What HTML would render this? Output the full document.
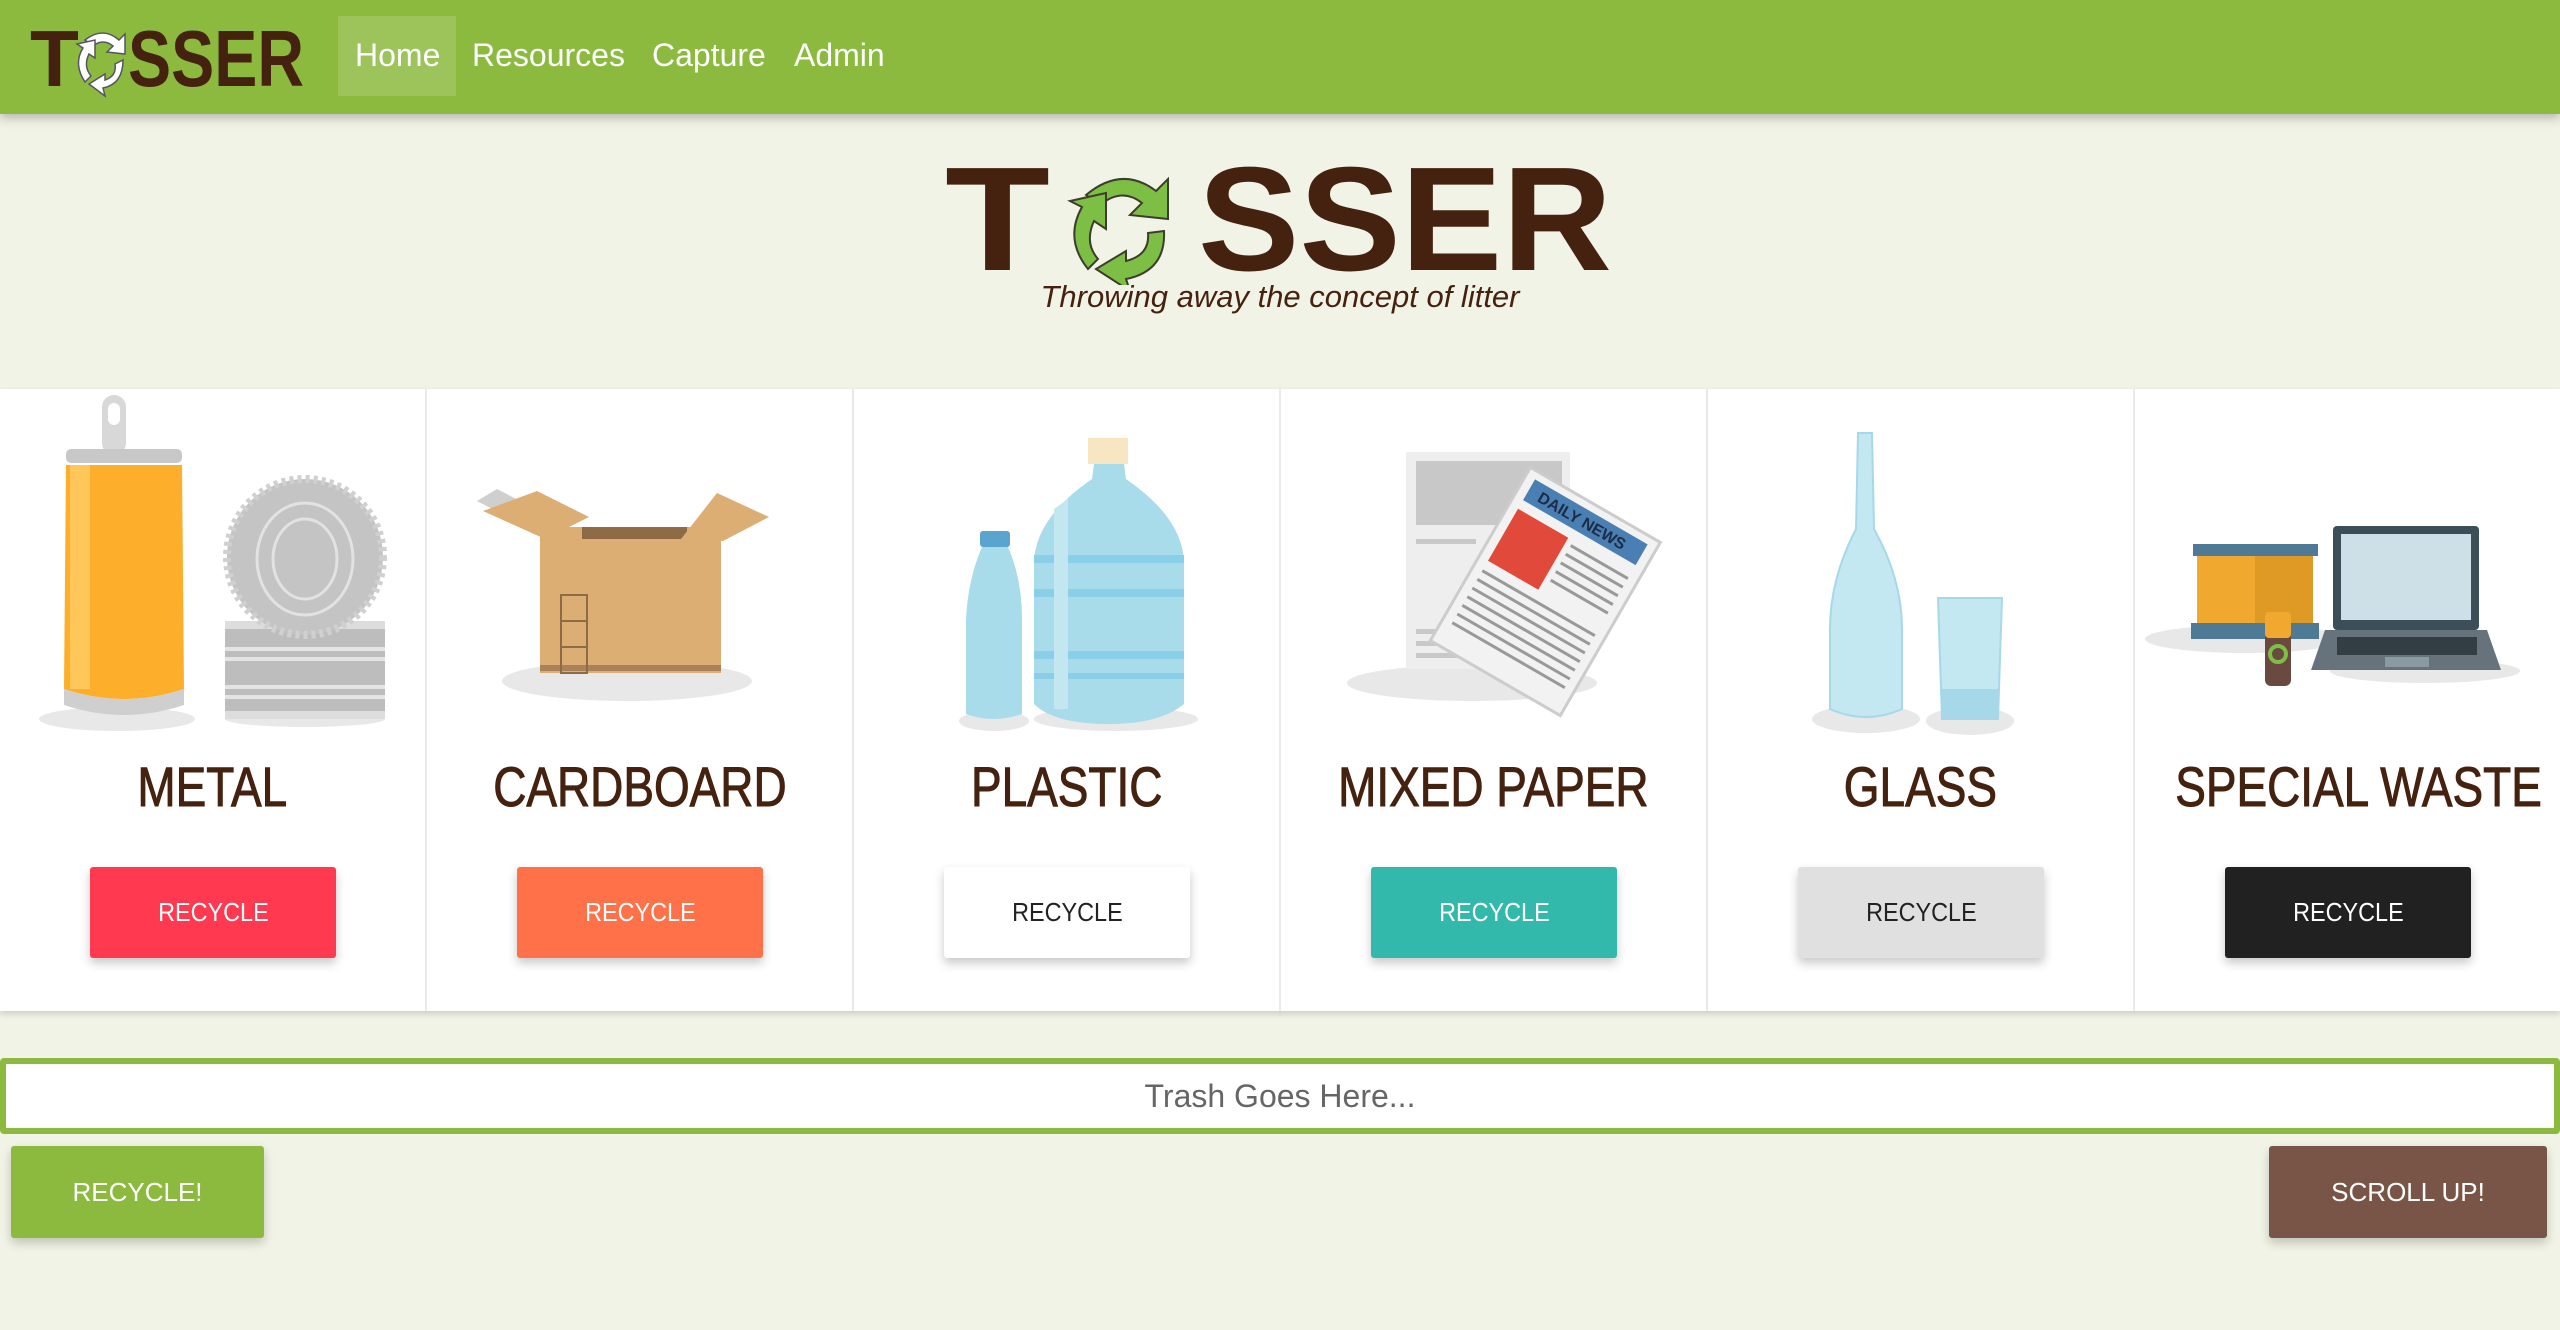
<!DOCTYPE html>
<html><head><meta charset="utf-8">
<style>
*{box-sizing:border-box;margin:0;padding:0}
html,body{width:2560px;height:1330px;overflow:hidden}
body{background:#F1F3E6;font-family:"Liberation Sans",sans-serif;position:relative}
.nav{position:absolute;left:0;top:0;width:2560px;height:114px;background:#8BBA3E;box-shadow:0 4px 10px rgba(0,0,0,.25);z-index:2}
.navlogo{position:absolute;left:30px;top:14px;height:86px;width:280px}
.home{position:absolute;left:338px;top:16px;width:118px;height:80px;background:rgba(255,255,255,.15)}
.nl{position:absolute;top:32px;color:#fff;font-size:32px;line-height:46px}
.logo{position:absolute;left:940px;top:150px;width:680px;height:135px}
.tag{position:absolute;left:0;width:2560px;top:279px;text-align:center;font-style:italic;font-size:31px;color:#45220F}
.cards{position:absolute;left:0;top:389px;width:2560px;height:622px;display:flex;box-shadow:0 3px 6px rgba(0,0,0,.15)}
.card{position:relative;flex:1;background:#fff;border-left:2px solid #eaeaea}
.card:first-child{border-left:none}
.card svg{position:absolute;left:0;top:0;width:426px;height:350px}
.title{position:absolute;top:368px;left:0;right:0;text-align:center;font-size:56px;color:#45220F;line-height:60px;-webkit-text-stroke:1px #45220F}
.title span{display:inline-block;transform:scaleX(.82);white-space:nowrap}
.btn{position:absolute;left:90px;top:478px;width:246px;height:91px;border-radius:3px;font-size:26px;line-height:91px;text-align:center;box-shadow:0 5px 10px rgba(0,0,0,.22)}
.btn span{display:inline-block;transform:scaleX(.9)}
.inp{position:absolute;left:0;top:1058px;width:2560px;height:76px;border:6px solid #8BBA3E;border-radius:4px;background:#fff;text-align:center;font-size:32px;line-height:64px;color:#666}
.big{position:absolute;top:1146px;height:92px;border-radius:3px;color:#fff;font-size:26px;line-height:92px;text-align:center;box-shadow:0 5px 10px rgba(0,0,0,.2)}
</style></head><body>
<div class="nav">
 <svg class="navlogo" viewBox="0 0 280 86">
  <text x="0" y="72" font-family="Liberation Sans" font-weight="bold" font-size="80" fill="#45220F" textLength="50">T</text>
  <g transform="translate(73,44)" fill="#fff" stroke="#556" stroke-width="1.5">
   <path d="M-18,-18 Q0,-32 16,-18 L22,-24 L22,-4 L4,-6 L10,-12 Q0,-20 -10,-12Z"/>
   <path d="M20,2 Q20,26 0,30 L2,38 L-14,26 L2,16 L2,22 Q14,18 12,6Z"/>
   <path d="M-18,24 Q-30,6 -20,-10 L-26,-14 L-8,-18 L-8,0 L-14,-4 Q-20,8 -12,18Z"/>
  </g>
  <text x="98" y="72" font-family="Liberation Sans" font-weight="bold" font-size="80" fill="#45220F" textLength="176" lengthAdjust="spacingAndGlyphs">SSER</text>
 </svg>
 <div class="home"></div>
 <div class="nl" style="left:355px">Home</div>
 <div class="nl" style="left:472px">Resources</div>
 <div class="nl" style="left:652px">Capture</div>
 <div class="nl" style="left:794px">Admin</div>
</div>

<svg class="logo" viewBox="940 150 680 135">
 <text x="945" y="270" font-family="Liberation Sans" font-weight="bold" font-size="148" fill="#45220F" textLength="105" lengthAdjust="spacingAndGlyphs">T</text>
 <g transform="translate(1122,225)" fill="#7DBE45" stroke="#3d3d2d" stroke-width="2">
  <path d="M-36,-30 Q0,-60 34,-34 L46,-46 L46,-6 L8,-10 L20,-22 Q0,-38 -22,-20Z"/>
  <path d="M42,6 Q44,46 4,54 L8,66 L-26,44 L4,26 L4,36 Q28,30 26,8Z"/>
  <path d="M-34,44 Q-58,14 -40,-18 L-52,-24 L-16,-32 L-16,4 L-28,-4 Q-38,18 -24,34Z"/>
 </g>
 <text x="1198" y="270" font-family="Liberation Sans" font-weight="bold" font-size="148" fill="#45220F" textLength="414" lengthAdjust="spacingAndGlyphs">SSER</text>
</svg>
<div class="tag">Throwing away the concept of litter</div>

<div class="cards">
 <div class="card">
  <svg viewBox="0 0 426 350">
   <ellipse cx="117" cy="330" rx="78" ry="12" fill="#e8e8e8"/>
   <rect x="102" y="6" width="24" height="60" rx="12" fill="#d8d8d8"/><rect x="108" y="14" width="12" height="22" rx="6" fill="#fff"/>
   <rect x="66" y="60" width="116" height="14" rx="5" fill="#c8c8c8"/>
   <path d="M66,76 L182,76 L184,300 Q124,320 64,300Z" fill="#FDAE2B"/>
   <rect x="70" y="76" width="20" height="224" fill="#FFC65A"/>
   <path d="M64,300 Q124,320 184,300 L184,316 Q124,336 64,316Z" fill="#cfcfcf"/>
   <ellipse cx="305" cy="330" rx="80" ry="8" fill="#e8e8e8"/>
   <rect x="225" y="232" width="160" height="98" fill="#bdbdbd"/>
   <rect x="225" y="232" width="160" height="8" fill="#ddd"/>
   <g fill="#e4e4e4"><rect x="225" y="258" width="160" height="4"/><rect x="225" y="268" width="160" height="4"/><rect x="225" y="296" width="160" height="4"/><rect x="225" y="306" width="160" height="4"/></g>
   <rect x="225" y="322" width="160" height="8" fill="#ddd"/>
   <circle cx="305" cy="168" r="78" fill="#c4c4c4" stroke="#d0d0d0" stroke-width="8" stroke-dasharray="4 4"/>
   <ellipse cx="305" cy="170" rx="48" ry="56" fill="none" stroke="#e2e2e2" stroke-width="3"/>
   <ellipse cx="305" cy="170" rx="32" ry="40" fill="none" stroke="#e2e2e2" stroke-width="3"/>
  </svg>
  <div class="title"><span>METAL</span></div>
  <div class="btn" style="background:#FF3A50;color:#fff"><span>RECYCLE</span></div>
 </div>
 <div class="card">
  <svg viewBox="0 0 426 350">
   <ellipse cx="200" cy="292" rx="125" ry="20" fill="#e8e8e8"/>
   <path d="M50,112 L70,100 L120,126 L100,138Z" fill="#cfcfcf"/>
   <rect x="113" y="138" width="181" height="146" fill="#DCAE73"/>
   <rect x="155" y="138" width="105" height="12" fill="#8E6B45"/>
   <rect x="113" y="276" width="181" height="6" fill="#a9825a"/>
   <path d="M56,122 L110,102 L162,128 L118,150Z" fill="#DCAE73"/>
   <path d="M254,150 L290,104 L342,128 L296,152Z" fill="#DCAE73"/>
   <g fill="none" stroke="#8E6B45" stroke-width="2"><rect x="134" y="232" width="26" height="26"/><rect x="134" y="258" width="26" height="26"/><rect x="134" y="206" width="26" height="26"/></g>
  </svg>
  <div class="title"><span>CARDBOARD</span></div>
  <div class="btn" style="background:#FF7149;color:#fff"><span>RECYCLE</span></div>
 </div>
 <div class="card">
  <svg viewBox="0 0 426 350">
   <ellipse cx="140" cy="332" rx="35" ry="10" fill="#e8e8e8"/><ellipse cx="262" cy="330" rx="82" ry="12" fill="#e8e8e8"/>
   <rect x="126" y="142" width="30" height="16" rx="3" fill="#5AA5D0"/>
   <path d="M128,158 L154,158 Q168,190 168,230 L168,325 Q140,335 112,325 L112,230 Q114,190 128,158Z" fill="#A9DCEB"/>
   <rect x="234" y="49" width="40" height="26" fill="#F7E6C1"/>
   <path d="M240,75 L270,75 L272,90 Q330,130 330,175 L330,315 Q306,335 255,335 Q200,335 180,315 L180,175 Q180,130 238,90Z" fill="#A9DCEB"/>
   <g fill="#89CFE7"><rect x="180" y="166" width="150" height="8"/><rect x="180" y="200" width="150" height="8"/><rect x="180" y="262" width="150" height="8"/><rect x="180" y="284" width="150" height="6"/></g>
   <path d="M200,120 L214,110 L214,320 L200,320Z" fill="#C2E7F1"/>
  </svg>
  <div class="title"><span>PLASTIC</span></div>
  <div class="btn" style="background:#fff;color:#222"><span>RECYCLE</span></div>
 </div>
 <div class="card">
  <svg viewBox="0 0 426 350">
   <ellipse cx="191" cy="294" rx="125" ry="18" fill="#e8e8e8"/>
   <rect x="125" y="63" width="164" height="217" fill="#eee"/>
   <rect x="135" y="72" width="146" height="64" fill="#c8c8c8"/>
   <g fill="#c8c8c8"><rect x="135" y="240" width="80" height="5"/><rect x="135" y="252" width="80" height="5"/><rect x="135" y="264" width="80" height="5"/><rect x="135" y="150" width="60" height="5"/></g>
   <g transform="rotate(30 260 200)">
    <rect x="190" y="100" width="150" height="200" fill="#f2f2f2" stroke="#ccc" stroke-width="3"/>
    <rect x="200" y="108" width="130" height="24" fill="#4A7FB4"/>
    <text x="212" y="126" font-family="Liberation Sans" font-weight="bold" font-size="16" fill="#1d2c44">DAILY NEWS</text>
    <rect x="200" y="142" width="58" height="60" fill="#E14A3A"/>
    <g fill="#999"><rect x="264" y="146" width="66" height="3"/><rect x="264" y="156" width="66" height="3"/><rect x="264" y="166" width="66" height="3"/><rect x="264" y="176" width="66" height="3"/><rect x="264" y="186" width="66" height="3"/><rect x="200" y="212" width="130" height="3"/><rect x="200" y="222" width="130" height="3"/><rect x="200" y="232" width="130" height="3"/><rect x="200" y="242" width="130" height="3"/><rect x="200" y="252" width="130" height="3"/><rect x="200" y="262" width="130" height="3"/><rect x="200" y="272" width="130" height="3"/></g>
   </g>
  </svg>
  <div class="title"><span>MIXED PAPER</span></div>
  <div class="btn" style="background:#33B9AB;color:#fff"><span>RECYCLE</span></div>
 </div>
 <div class="card">
  <svg viewBox="0 0 426 350">
   <ellipse cx="158" cy="330" rx="54" ry="14" fill="#e8e8e8"/><ellipse cx="262" cy="332" rx="44" ry="14" fill="#e8e8e8"/>
   <path d="M150,44 L164,44 L166,140 Q194,190 194,240 L194,320 Q158,336 122,320 L122,240 Q122,190 148,140Z" fill="#C4E8F2" stroke="#A6D8EA" stroke-width="2"/>
   <path d="M230,209 L294,209 L290,330 L234,330Z" fill="#C4E8F2" stroke="#A6D8EA" stroke-width="2"/>
   <rect x="234" y="300" width="56" height="30" fill="#A6D8EA"/>
  </svg>
  <div class="title"><span>GLASS</span></div>
  <div class="btn" style="background:#E0E0E0;color:#222"><span>RECYCLE</span></div>
 </div>
 <div class="card">
  <svg viewBox="0 0 426 350">
   <ellipse cx="110" cy="250" rx="100" ry="14" fill="#e8e8e8"/><ellipse cx="290" cy="282" rx="95" ry="12" fill="#e8e8e8"/>
   <rect x="58" y="155" width="125" height="12" fill="#4E7A96"/>
   <rect x="62" y="167" width="116" height="70" fill="#F0A92E"/>
   <rect x="120" y="167" width="58" height="70" fill="#DF9A26"/>
   <rect x="56" y="234" width="128" height="16" fill="#4E7A96"/>
   <rect x="198" y="137" width="146" height="104" rx="4" fill="#3C4E58"/>
   <rect x="206" y="145" width="130" height="86" fill="#CDE0E8"/>
   <path d="M190,241 L352,241 L366,281 L176,281Z" fill="#66737C"/>
   <rect x="202" y="248" width="140" height="18" fill="#333d44"/>
   <rect x="250" y="268" width="44" height="10" fill="#8a99a2"/>
   <rect x="130" y="223" width="26" height="74" rx="6" fill="#6A4A40"/>
   <rect x="130" y="223" width="26" height="26" rx="4" fill="#F0A92E"/>
   <circle cx="143" cy="265" r="8" fill="none" stroke="#7DBE45" stroke-width="4"/>
  </svg>
  <div class="title"><span>SPECIAL WASTE</span></div>
  <div class="btn" style="background:#212121;color:#fff"><span>RECYCLE</span></div>
 </div>
</div>

<div class="inp">Trash Goes Here...</div>
<div class="big" style="left:11px;width:253px;background:#8BBA3E">RECYCLE!</div>
<div class="big" style="left:2269px;width:278px;background:#795548">SCROLL UP!</div>
</body></html>
